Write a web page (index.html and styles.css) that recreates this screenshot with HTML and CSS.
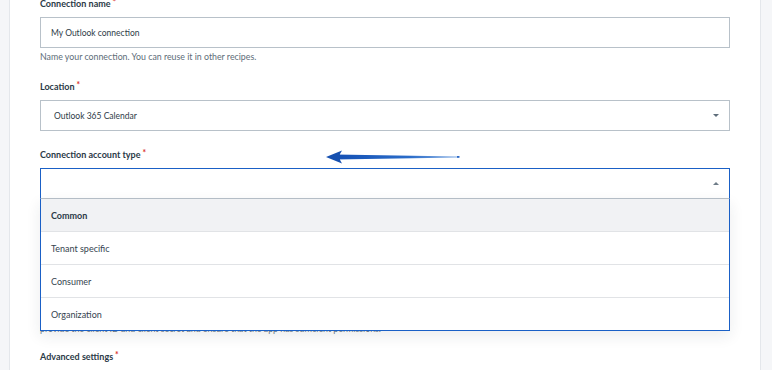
FILE: index.html
```html
<!DOCTYPE html>
<html lang="en">
<head>
<meta charset="utf-8">
<title>Connection</title>
<link rel="stylesheet" href="styles.css">
</head>
<body>
<div class="page">
  <aside class="rail rail-left"></aside>
  <main class="content">
    <div class="field">
      <div class="label">Connection name<span class="req">*</span></div>
      <div class="input"><span class="value">My Outlook connection</span></div>
      <div class="hint">Name your connection. You can reuse it in other recipes.</div>
    </div>
    <div class="field">
      <div class="label">Location<span class="req">*</span></div>
      <div class="input select"><span class="value loc">Outlook 365 Calendar</span><span class="caret down"></span></div>
    </div>
    <div class="field open-field">
      <div class="label">Connection account type<span class="req">*</span></div>
      <div class="input select open"><span class="value"></span><span class="caret up"></span></div>
      <ul class="menu">
        <li class="opt active">Common</li>
        <li class="opt">Tenant specific</li>
        <li class="opt">Consumer</li>
        <li class="opt">Organization</li>
      </ul>
      <div class="hint hidden-hint">provide the client ID and client secret and ensure that the app has sufficient permissions.</div>
      <svg class="arrow" width="140" height="20" viewBox="0 0 140 20" aria-hidden="true">
        <defs>
          <linearGradient id="ag" x1="0" y1="0" x2="1" y2="0">
            <stop offset="0" stop-color="#1450b4"/>
            <stop offset="0.6" stop-color="#2a6cc9"/>
            <stop offset="1" stop-color="#8fb5e6"/>
          </linearGradient>
        </defs>
        <path d="M14 8.4 L138 10.4 L138 11.4 L14 13.6 Z" fill="url(#ag)"/>
        <path d="M5 11 L21 4.5 Q16 11 21 17.5 Z" fill="#1650b0"/>
        <rect x="136" y="10.1" width="2.5" height="1.6" fill="#1c5cc0"/>
      </svg>
    </div>
    <div class="field">
      <div class="label">Advanced settings<span class="req">*</span></div>
    </div>
  </main>
  <aside class="rail rail-right"></aside>
</div>
</body>
</html>
```

FILE: styles.css
```css
* { box-sizing: border-box; }
html, body { margin: 0; padding: 0; }
body {
  background: #ffffff;
  font-family: "Lato", "Liberation Sans", sans-serif;
  color: #2b3a47;
  overflow: hidden;
}
.page {
  display: flex;
  width: 772px;
  height: 370px;
}
.rail {
  background: #f5f6f8;
  flex: none;
}
.rail-left {
  width: 10px;
  border-right: 1px solid #e4e7eb;
}
.rail-right {
  width: 12px;
  border-left: 1px solid #e4e7eb;
}
.content {
  flex: 1;
  padding: 0 30px 0 30px;
  margin-top: -2px;
}
.field {
  margin-bottom: 18px;
  position: relative;
}
.label {
  font-size: 9px;
  font-weight: 700;
  line-height: 12px;
  height: 12px;
  color: #2b3a47;
  margin-bottom: 7px;
}
.req {
  color: #d9312b;
  font-size: 8.5px;
  font-weight: 700;
  line-height: 0;
  margin-left: 2px;
  vertical-align: 2px;
}
.input {
  height: 31px;
  border: 1px solid #b8c1c9;
  display: flex;
  align-items: center;
  padding: 0 10px;
  font-size: 8.5px;
  color: #2e3c48;
  background: #fff;
}
.value { flex: 1; }
.value.loc { padding-left: 3px; }
.hint {
  margin-top: 2px;
  font-size: 8.8px;
  line-height: 13px;
  color: #5d6c78;
}
.caret {
  width: 0;
  height: 0;
  border-left: 3px solid transparent;
  border-right: 3px solid transparent;
}
.caret.down { border-top: 3px solid #5e6d7a; }
.caret.up { border-bottom: 3px solid #6e7c88; }
.input.open {
  border: 1px solid #1a60c6;
  border-bottom: 1px solid #b8c1c9;
}
.menu {
  list-style: none;
  margin: 0;
  padding: 0;
  position: absolute;
  left: 0;
  right: 0;
  top: 50px;
  border: 1px solid #1a60c6;
  border-top: none;
  background: #fff;
  box-shadow: 0 5px 14px rgba(30, 40, 60, 0.09);
  z-index: 2;
}
.opt {
  height: 33px;
  display: flex;
  align-items: center;
  padding: 0 10px;
  font-size: 9px;
  color: #36444f;
  border-top: 1px solid #e1e3e6;
}
.opt:first-child { border-top: none; height: 32px; }
.opt.active {
  background: #f1f2f4;
  font-weight: 700;
  color: #2b3a47;
}
.open-field { margin-bottom: 16px; }
.hidden-hint {
  margin-top: 123px;
  color: #6b7a86;
}
.arrow {
  position: absolute;
  left: 281px;
  top: -3px;
  z-index: 3;
}
```
